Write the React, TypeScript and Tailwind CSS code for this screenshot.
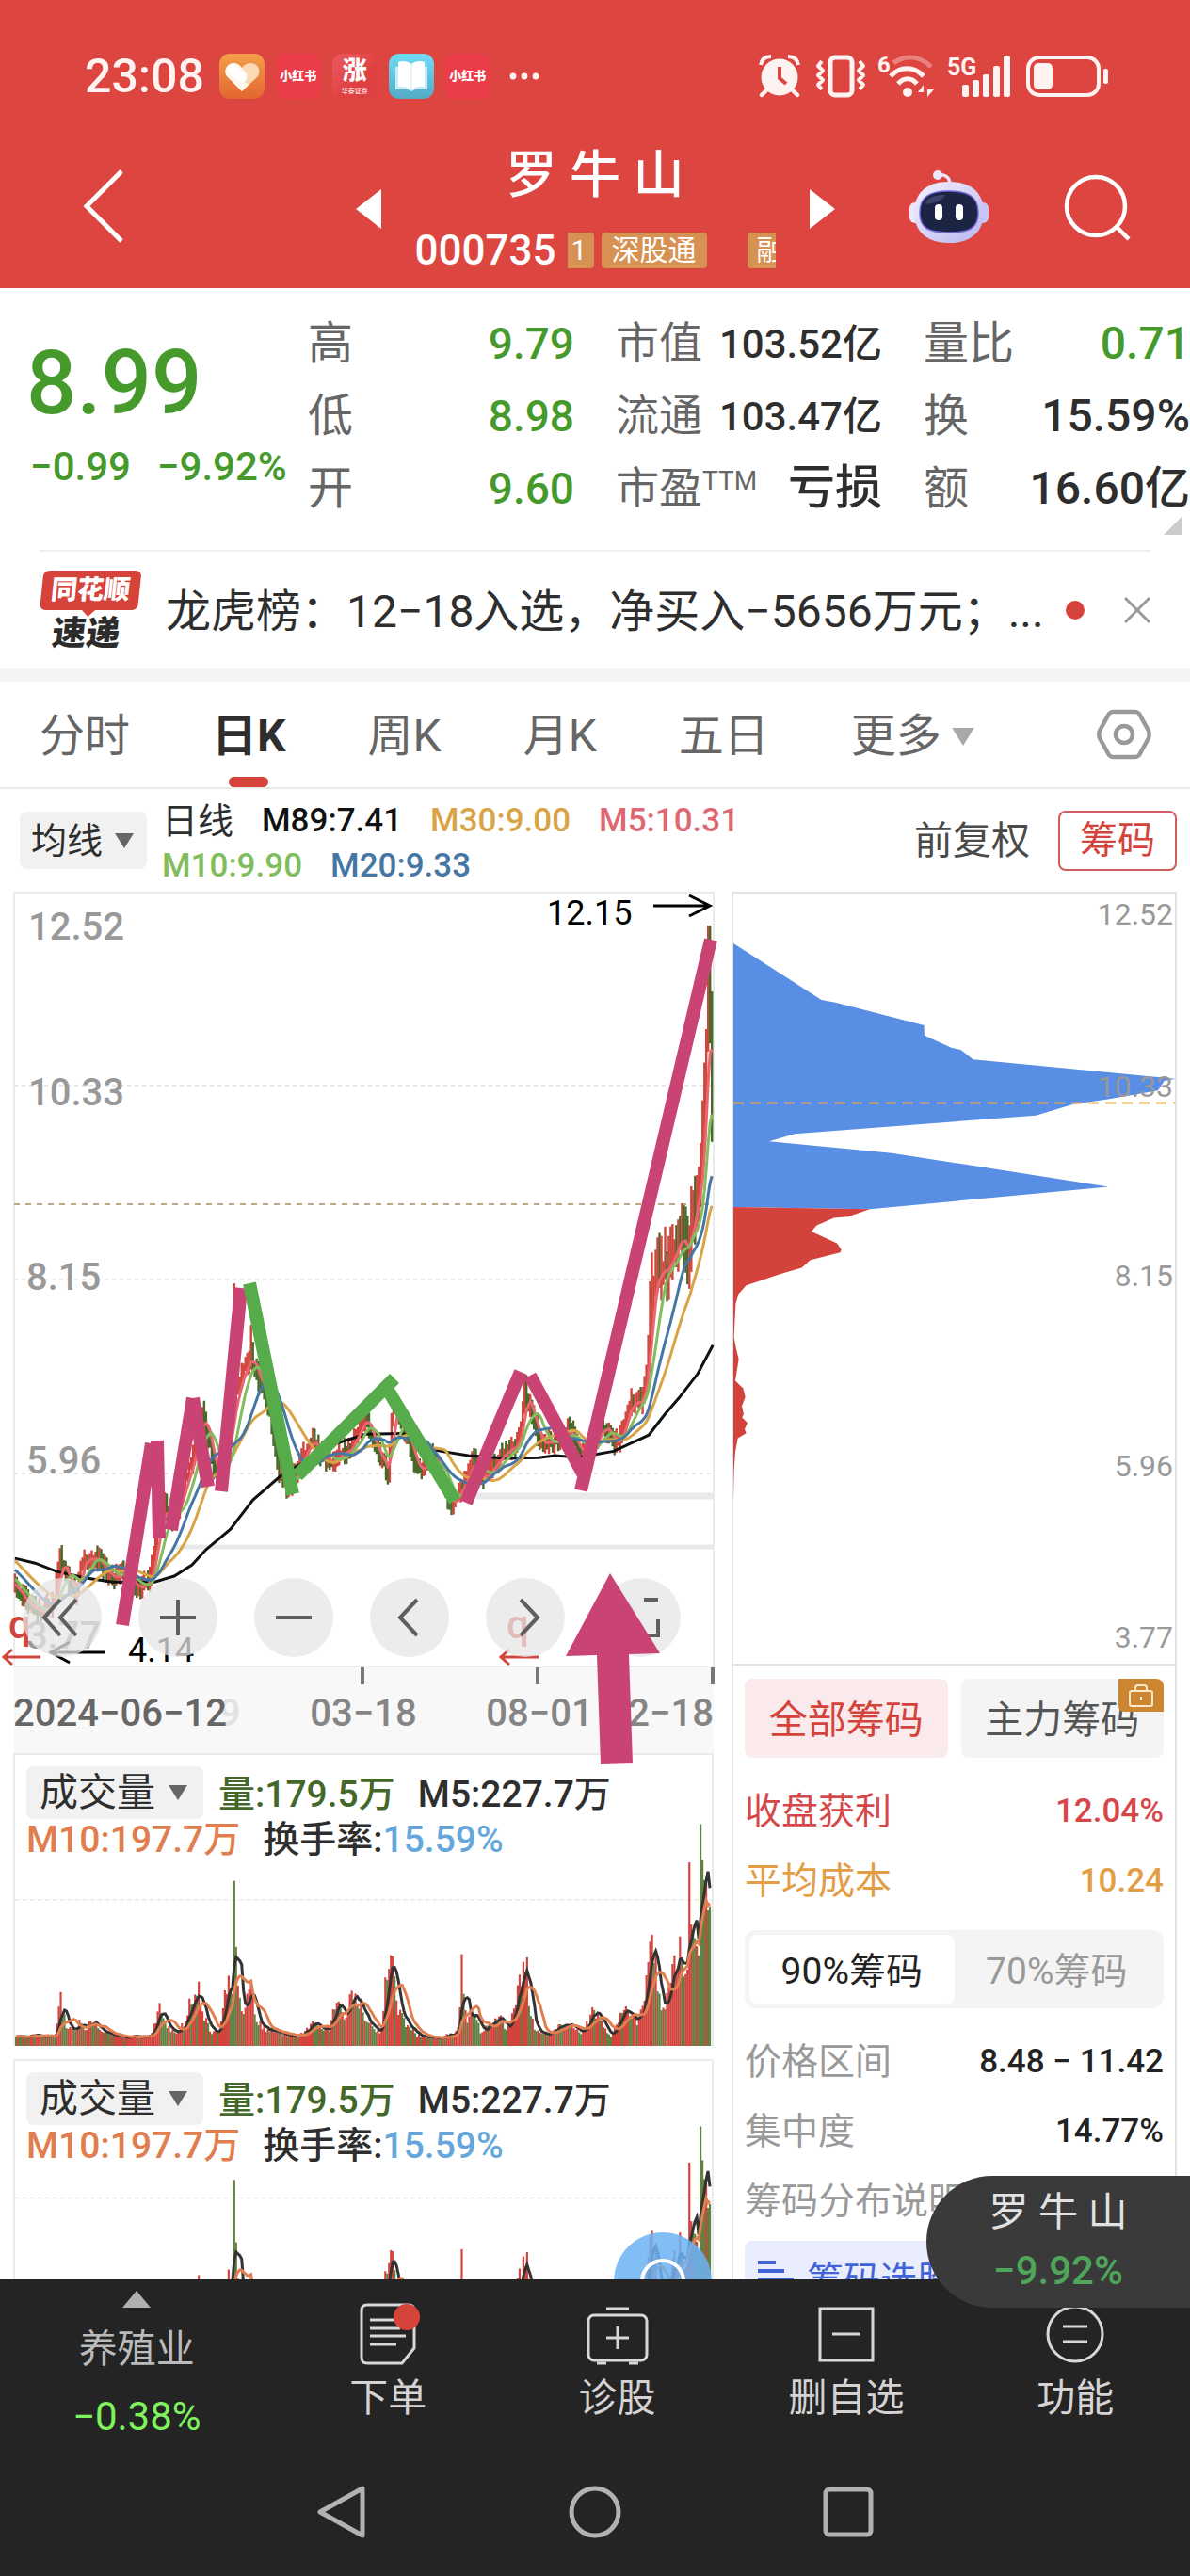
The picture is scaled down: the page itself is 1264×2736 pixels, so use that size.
import type { ReactNode } from "react"

type Point = [number, number]

const START = 32
const STEP = 4
const COUNT = 373

const closeKeys: Point[] = [
    [-90, 830], [30, 1000], [60, 1060], [90, 1090], [115, 1040], [128, 920], [140, 960], [160, 1030], [175, 930],
    [205, 915], [240, 980], [262, 950], [300, 1010], [318, 990], [330, 880], [350, 750], [370, 810], [385, 720],
    [410, 620], [430, 470], [445, 540], [455, 640], [472, 690], [490, 520], [501, 420], [515, 350], [535, 290],
    [550, 360], [575, 450], [590, 620], [612, 700], [640, 620], [665, 550], [700, 620], [740, 590], [780, 480],
    [805, 590], [828, 650], [838, 430], [860, 500], [890, 640], [905, 640], [925, 590], [963, 760], [985, 700],
    [1007, 620], [1035, 670], [1080, 580], [1105, 570], [1120, 410], [1135, 470], [1155, 560], [1190, 550],
    [1216, 520], [1240, 590], [1265, 580], [1290, 500], [1315, 570], [1335, 490], [1350, 430], [1370, 430],
    [1380, 330], [1392, 100], [1400, 40], [1425, 20], [1445, -50], [1457, -80], [1470, 0], [1478, -200],
    [1485, -150], [1493, -250], [1500, -400], [1506, -600], [1512, -850], [1516, -760], [1522, -300],
]

const slowKeys: Point[] = [
    [32, 915], [75, 930], [120, 955], [180, 975], [240, 988], [330, 988], [372, 970], [410, 935], [440, 888],
    [492, 825], [540, 735], [600, 660], [660, 610], [720, 560], [780, 532], [860, 530], [930, 582], [1000, 598],
    [1080, 607], [1150, 605], [1185, 598], [1235, 604], [1310, 585], [1385, 535], [1420, 470], [1450, 420],
    [1490, 345], [1522, 258],
]

const volumeKeys: Point[] = [
    [30, 838], [118, 838], [122, 760], [127, 715], [131, 745], [140, 800], [160, 820], [170, 780], [180, 825],
    [195, 778], [210, 820], [240, 840], [320, 840], [330, 800], [337, 735], [350, 800], [375, 825], [395, 800],
    [405, 730], [423, 685], [436, 770], [450, 825], [470, 820], [480, 710], [488, 668], [495, 720], [497, 690],
    [501, 395], [505, 585], [510, 700], [518, 775], [527, 720], [535, 690], [545, 780], [570, 820], [600, 830],
    [640, 840], [665, 800], [705, 815], [722, 707], [735, 790], [750, 710], [770, 727], [785, 800], [815, 830],
    [826, 650], [834, 542], [840, 612], [850, 740], [865, 790], [890, 835], [940, 845], [975, 825], [983, 810],
    [987, 606], [993, 720], [1000, 790], [1010, 740], [1030, 830], [1067, 770], [1085, 815], [1100, 760],
    [1113, 665], [1120, 628], [1128, 615], [1133, 760], [1145, 820], [1170, 835], [1216, 790], [1250, 830],
    [1268, 747], [1290, 800], [1310, 840], [1330, 770], [1345, 755], [1365, 800], [1378, 725], [1392, 570],
    [1397, 550], [1402, 590], [1412, 720], [1422, 760], [1432, 700], [1442, 590], [1450, 690], [1457, 555],
    [1465, 670], [1473, 650], [1477, 342], [1482, 465], [1487, 560], [1496, 610], [1501, 232], [1505, 335],
    [1510, 335], [1515, 480], [1522, 495],
]

const noise = (i: number) => {
    const v = Math.sin(i * 127.1 + 11.7) * 43758.5453
    return v - Math.floor(v)
}

const valueAt = (keys: Point[], x: number) => {
    if (x <= keys[0][0]) return keys[0][1]
    for (let i = 1; i < keys.length; i++) {
        if (x <= keys[i][0]) {
            const [x0, y0] = keys[i - 1]
            const [x1, y1] = keys[i]
            return y0 + ((y1 - y0) * (x - x0)) / (x1 - x0)
        }
    }
    return keys[keys.length - 1][1]
}

// chart grid to svg user units
const px = (x: number) => x / 2.01
const py = (y: number) => 1340 + y / 2.904

const closes = Array.from({ length: COUNT + 30 }, (_, i) => {
    const x = START + (i - 30) * STEP
    return valueAt(closeKeys, x) + (noise(i) - 0.5) * 26
})

const average = (values: number[], i: number, n: number) => {
    const part = values.slice(Math.max(0, i - n + 1), i + 1)
    return part.reduce((a, b) => a + b, 0) / part.length
}

const maPath = (n: number) =>
    Array.from({ length: COUNT }, (_, i) => `${i ? "L" : "M"}${px(START + i * STEP).toFixed(1)} ${py(average(closes, i + 30, n)).toFixed(1)}`).join("")

const toPath = (keys: Point[]) => keys.map(([x, y], i) => `${i ? "L" : "M"}${px(x).toFixed(1)} ${py(y).toFixed(1)}`).join("")

const candles = Array.from({ length: COUNT }, (_, i) => {
    const x = START + i * STEP
    const close = closes[i + 30]
    const open = closes[i + 29]
    const wide = x > 1385 ? 3 : 1
    let high = Math.min(open, close) - (8 + noise(i + 500) * 34) * wide
    const low = Math.max(open, close) + (8 + noise(i + 900) * 26) * wide
    if (Math.abs(x - 501) < 2) high = 67
    if (Math.abs(x - 537) < 2) high = 195
    if (Math.abs(x - 1122) < 3) high = 350
    if (Math.abs(x - 1514) < 3) high = -1037
    return { x: px(x), high: py(high), low: py(low), up: close < open }
})

const tops = Array.from({ length: COUNT }, (_, i) => {
    const x = START + i * STEP
    const peak = volumeKeys.find(([kx, ky]) => Math.abs(kx - x) < 2 && ky < 730)
    if (peak) return peak[1]
    return 870 - (870 - valueAt(volumeKeys, x)) * (0.72 + noise(i + 40) * 0.34)
})

const isGreen = (i: number) => {
    const x = START + i * STEP
    if (Math.abs(x - 503) < 4 || Math.abs(x - 1500) < 2 || x > 1516) return true
    return (tops[i - 1] ?? 0) < tops[i] && noise(i + 70) > 0.25
}

const volumePath = (n: number) =>
    tops.map((_, i) => `${i ? "L" : "M"}${START + i * STEP} ${average(tops, i, n).toFixed(1)}`).join("")

function Caret({ className }: { className: string }) {
    return (
        <svg viewBox="0 0 22 16" className={className} fill="currentColor">
            <path d="M1 0h20L11 16z" />
        </svg>
    )
}

function StatusBar() {
    return (
        <div className="flex h-[146px] items-center pt-4 pl-[90px] pr-[86px]">
            <span className="text-[50px] font-medium leading-[60px] text-[#fff3f2]">23:08</span>
            <div className="ml-4 flex items-center gap-3">
                <svg viewBox="0 0 48 48" className="size-12">
                    <defs>
                        <linearGradient id="orange" x1="0" y1="0" x2="0" y2="1">
                            <stop stopColor="#f3a04a" />
                            <stop offset="1" stopColor="#e3652f" />
                        </linearGradient>
                    </defs>
                    <rect width="48" height="48" rx="11" fill="url(#orange)" />
                    <path d="M24 40 8 24a9 9 0 0 1 0-10c4-6 12-5 16 1 4-6 13-7 17-1a9 9 0 0 1-1 11z" fill="#fbd9b4" />
                    <path d="M24 40 8 24a9 9 0 0 1 0-10c4-5 10-5 14-1l7 8c2 4-2 8-6 6l8 6z" fill="#fff" opacity=".75" />
                    <path d="m13 16 11 9" stroke="#fff" strokeWidth="10" strokeLinecap="round" />
                </svg>
                <span className="flex size-12 items-center justify-center rounded-[11px] bg-[#ea3d49] text-[13px] font-black text-white">小红书</span>
                <span className="flex size-12 flex-col items-center justify-center rounded-[11px] bg-linear-to-br from-[#ec5a64] to-[#df4041] to-60% text-white">
                    <span className="text-[26px] font-black leading-[32px]">涨</span>
                    <span className="text-[7px] leading-[12px]">华泰证券</span>
                </span>
                <svg viewBox="0 0 48 48" className="size-12">
                    <defs>
                        <linearGradient id="sky" x1="0" y1="0" x2="0" y2="1">
                            <stop stopColor="#71dcf6" />
                            <stop offset="1" stopColor="#54aac6" />
                        </linearGradient>
                    </defs>
                    <rect width="48" height="48" rx="11" fill="url(#sky)" />
                    <path d="M7 14h34v24H28l-4 2-4-2H7z" fill="#c4eef8" />
                    <path d="M10 9c5-2 10-1 14 2 4-3 9-4 14-2v26c-5-1-10 0-14 4-4-4-9-5-14-4z" fill="#fff" />
                    <path d="M24 11v28" stroke="#cfe9f1" />
                </svg>
                <span className="flex size-12 items-center justify-center rounded-[11px] bg-[#ea3d49] text-[13px] font-black text-white">小红书</span>
            </div>
            <svg viewBox="0 0 32 8" className="ml-5 h-2 w-8" fill="#fff3f2">
                <circle cx="4" cy="4" r="3.4" />
                <circle cx="16" cy="4" r="3.4" />
                <circle cx="28" cy="4" r="3.4" />
            </svg>
            <div className="ml-auto flex items-center gap-3 text-[#fff3f2]">
                <svg viewBox="0 0 44 46" className="h-[46px] w-[44px]">
                    <circle cx="22" cy="24" r="19.5" fill="currentColor" />
                    <path d="M2 11c1-6 5-9 11-9M42 11c-1-6-5-9-11-9" stroke="currentColor" strokeWidth="4" fill="none" />
                    <path d="m8 38-5 5M36 38l5 5" stroke="currentColor" strokeWidth="4.500" strokeLinecap="round" />
                    <path d="M22 13v12l7 6" stroke="#dd4540" strokeWidth="4" fill="none" />
                </svg>
                <svg viewBox="0 0 54 46" className="ml-1 h-[46px] w-[54px]" fill="none" stroke="currentColor" strokeLinejoin="round">
                    <rect x="16" y="3" width="23" height="40" rx="5" strokeWidth="5" />
                    <path d="m7 7-4 5 5 5-5 5 5 5-5 5 4 5M47 7l4 5-5 5 5 5-5 5 5 5-4 5" strokeWidth="4" />
                </svg>
                <svg viewBox="0 0 62 48" className="h-12 w-[62px]" fill="none" stroke="currentColor">
                    <text x="0" y="20" fontSize="24" fontWeight="700" fill="currentColor" stroke="none">6</text>
                    <path d="M17 10c13-10 29-7 40 4" strokeWidth="5" opacity=".35" />
                    <path d="M14 24c10-11 25-11 35 0" strokeWidth="5" />
                    <path d="M22 32c6-7 14-7 20 0" strokeWidth="5" />
                    <circle cx="32" cy="41" r="5" fill="currentColor" stroke="none" />
                    <path d="M49 46V33l-6 8h6zM53 33v13l7-8h-7z" fill="currentColor" stroke="none" />
                </svg>
                <svg viewBox="0 0 68 48" className="h-12 w-[68px]" fill="currentColor">
                    <text x="0" y="23" fontSize="25" fontWeight="700">5G</text>
                    <rect x="16" y="33" width="7" height="13" rx="2" />
                    <rect x="27" y="28" width="7" height="18" rx="2" />
                    <rect x="38" y="22" width="7" height="24" rx="2" />
                    <rect x="49" y="13" width="7" height="33" rx="2" />
                    <rect x="60" y="2" width="7" height="44" rx="2" />
                </svg>
                <svg viewBox="0 0 88 46" className="ml-1 h-[46px] w-[88px]">
                    <rect x="2" y="3" width="75" height="40" rx="12" fill="none" stroke="currentColor" strokeWidth="4" />
                    <rect x="8" y="9" width="20" height="28" rx="5" fill="currentColor" />
                    <rect x="82" y="15" width="5" height="16" rx="2" fill="currentColor" />
                </svg>
            </div>
        </div>
    )
}

function TitleBar() {
    return (
        <div className="grid h-40 grid-cols-[1fr_auto_1fr] items-center">
            <button aria-label="返回" className="ml-[88px] w-11 pb-3.5">
                <svg viewBox="0 0 44 78" className="h-[78px] w-11" fill="none" stroke="#fff" strokeWidth="5">
                    <path d="M41 2 4 39l37 37" />
                </svg>
            </button>
            <div className="flex items-center gap-9">
                <button aria-label="上一只" className="pb-2">
                    <svg viewBox="0 0 27 42" className="h-[42px] w-[27px]" fill="#fff"><path d="M27 0v42L0 21z" /></svg>
                </button>
                <div className="w-[383px] text-white">
                    <h1 className="h-20 text-center text-[54px] font-medium leading-[80px]">罗 牛 山</h1>
                    <div className="flex h-[78px] items-center">
                        <span className="text-[44px] font-medium">000735</span>
                        <div className="ml-auto flex w-[221px] gap-2 overflow-hidden text-[30px] leading-[38px]">
                            <span className="w-7 shrink-0 rounded-r bg-[#d69153] pl-1">1</span>
                            <span className="shrink-0 rounded bg-[#d69153] px-[11px]">深股通</span>
                            <span className="ml-[35px] shrink-0 rounded bg-[#d69153] px-[10px]">融</span>
                        </div>
                    </div>
                </div>
                <button aria-label="下一只" className="pb-2">
                    <svg viewBox="0 0 27 42" className="h-[42px] w-[27px]" fill="#fff"><path d="M0 0v42l27-21z" /></svg>
                </button>
            </div>
            <div className="flex items-center justify-end gap-20 pb-3 pr-[62px]">
                <button aria-label="智能助手">
                    <svg viewBox="0 0 84 78" className="h-[78px] w-[84px]">
                        <defs>
                            <linearGradient id="shell" x1="0" y1="0" x2="1" y2="1">
                                <stop stopColor="#f4f2ff" />
                                <stop offset="1" stopColor="#b8b6ee" />
                            </linearGradient>
                        </defs>
                        <path d="M30 5c8-1 13 2 13 10" stroke="#efe6fb" strokeWidth="3.500" fill="none" />
                        <circle cx="30" cy="5" r="5" fill="#efe6fb" />
                        <rect x="0" y="34" width="12" height="22" rx="6" fill="#ece8fd" />
                        <rect x="72" y="34" width="12" height="22" rx="6" fill="#c9c6f3" />
                        <path d="M42 12c25 0 37 13 37 33S65 77 42 77 5 65 5 45s12-33 37-33z" fill="url(#shell)" />
                        <path d="M42 22c22 0 31 7 31 23s-9 21-31 21-31-5-31-21 9-23 31-23z" fill="#1c2444" stroke="#6f63d8" strokeWidth="1.500" />
                        <path d="M16 36c3-8 12-10 22-10-4 7-12 9-22 10z" fill="#48527a" opacity=".7" />
                        <rect x="27" y="36" width="8" height="17" rx="4" fill="#fff" />
                        <rect x="49" y="36" width="8" height="17" rx="4" fill="#fff" />
                    </svg>
                </button>
                <button aria-label="搜索">
                    <svg viewBox="0 0 72 72" className="size-[72px]" fill="none" stroke="#fff" strokeWidth="4.500">
                        <circle cx="34" cy="35" r="31" />
                        <path d="m56 57 13 13" />
                    </svg>
                </button>
            </div>
        </div>
    )
}

function Quote({ label, children }: { label: ReactNode; children: ReactNode }) {
    return (
        <div className="flex h-[77px] items-center justify-between whitespace-nowrap">
            <dt className="text-[#666]">{label}</dt>
            <dd className="font-medium">{children}</dd>
        </div>
    )
}

function QuotePanel() {
    return (
        <section className="relative grid grid-cols-[minmax(0,251fr)_minmax(0,283fr)_minmax(0,283fr)_minmax(0,283fr)] gap-11 pl-8 pt-5 pb-[27px] text-[48px]">
            <div className="whitespace-nowrap text-[#459a2b]">
                <p className="-ml-1 pt-[22px] text-[94px] font-medium leading-[118px]">8.99</p>
                <p className="flex gap-7 text-[42px] font-medium leading-[60px]">
                    <span>−0.99</span>
                    <span>−9.92%</span>
                </p>
            </div>
            <dl className="text-[#459a2b]">
                <Quote label="高"><span className="text-[46px]">9.79</span></Quote>
                <Quote label="低"><span className="text-[46px]">8.98</span></Quote>
                <Quote label="开"><span className="text-[46px]">9.60</span></Quote>
            </dl>
            <dl className="text-[46px] text-[#2e2e2e]">
                <Quote label="市值"><span className="text-[42px]">103.52亿</span></Quote>
                <Quote label="流通"><span className="text-[42px]">103.47亿</span></Quote>
                <Quote label={<>市盈<sup className="text-[28px]">TTM</sup></>}><span className="text-[50px]">亏损</span></Quote>
            </dl>
            <dl className="text-[#2e2e2e]">
                <Quote label="量比"><span className="text-[#459a2b]">0.71</span></Quote>
                <Quote label="换">15.59%</Quote>
                <Quote label="额">16.60亿</Quote>
            </dl>
            <svg viewBox="0 0 20 20" className="absolute bottom-4 right-2 size-5" fill="#ccc"><path d="M20 0v20H0z" /></svg>
        </section>
    )
}

function NewsRow() {
    return (
        <section className="mx-[42px] flex h-[126px] items-center border-t-2 border-[#efefef]">
            <div className="flex w-[104px] shrink-0 -skew-x-6 flex-col items-center">
                <span className="w-full rounded-md bg-[#d6433b] text-center text-[28px] font-black leading-[42px] text-white">同花顺</span>
                <svg viewBox="0 0 14 7" className="h-[7px] w-[14px]" fill="#d6433b"><path d="M0 0h14L7 7z" /></svg>
                <span className="text-[36px] font-black leading-[36px] text-[#2c2c2c]">速递</span>
            </div>
            <a href="#news" className="ml-[30px] min-w-0 flex-1 overflow-hidden whitespace-nowrap pt-1 text-[48px] leading-[64px] text-[#2e2e2e]">
                龙虎榜：12−18入选，净买入−5656万元；...
            </a>
            <span className="mr-[42px] size-5 rounded-full bg-[#d6433b]" />
            <button aria-label="关闭">
                <svg viewBox="0 0 28 28" className="size-7" stroke="#999" strokeWidth="3"><path d="m1 1 26 26M27 1 1 27" /></svg>
            </button>
        </section>
    )
}

function PeriodTabs() {
    return (
        <nav className="flex h-[114px] items-center gap-[87px] border-b-2 border-[#e9e9e9] pl-[42px] pr-[41px] text-[48px] text-[#666]">
            <button className="pt-1">分时</button>
            <button className="relative h-full pt-1 font-bold text-[#2e2e2e]">
                日K
                <span className="absolute bottom-0 left-1/2 h-[11px] w-[42px] -translate-x-1/2 rounded-md bg-[#d6433b]" />
            </button>
            <button className="pt-1">周K</button>
            <button className="pt-1">月K</button>
            <button className="pt-1">五日</button>
            <button className="flex items-center gap-2.5 pt-1">
                更多
                <Caret className="h-[21px] w-[26px] text-[#a9a9a9]" />
            </button>
            <button aria-label="设置" className="ml-auto">
                <svg viewBox="0 0 58 54" className="h-[54px] w-[58px]" fill="none" stroke="#999" strokeWidth="4.500" strokeLinejoin="round">
                    <path d="M17 3h24c2 0 3 1 4 2l10 18c1 3 1 5 0 8L45 49c-1 1-2 2-4 2H17c-2 0-3-1-4-2L3 31c-1-3-1-5 0-8L13 5c1-1 2-2 4-2z" />
                    <circle cx="29" cy="27" r="9" />
                </svg>
            </button>
        </nav>
    )
}

function AverageRow() {
    return (
        <section className="flex h-[109px] items-center pl-[21px] pr-3.5">
            <label className="flex h-[61px] w-[135px] shrink-0 items-center rounded-lg bg-[#f1f1f1] pl-3">
                <select aria-label="指标" className="w-[78px] appearance-none text-[38px] leading-[56px] text-[#2e2e2e] outline-none">
                    <option>均线</option>
                </select>
                <Caret className="ml-2.5 h-4 w-[22px] text-[#666]" />
            </label>
            <div className="ml-4 flex w-[660px] flex-wrap gap-x-[30px] pt-1.5 text-[35px] font-medium leading-[48px]">
                <span className="text-[38px] font-normal text-[#2e2e2e]">日线</span>
                <span className="text-[#111]">M89:7.41</span>
                <span className="text-[#d9a445]">M30:9.00</span>
                <span className="text-[#dd6873]">M5:10.31</span>
                <span className="text-[#80bd5c]">M10:9.90</span>
                <span className="text-[#4576a4]">M20:9.33</span>
            </div>
            <button className="ml-auto whitespace-nowrap text-[41px] leading-[60px] text-[#4a4a4a]">前复权</button>
            <button className="ml-[30px] h-16 w-[126px] rounded-lg border-2 border-[#d25c5a] text-[40px] leading-[56px] text-[#d6433b]">筹码</button>
        </section>
    )
}

const chartTools: { name: string; d: string }[] = [
    { name: "最左", d: "M20 3 3 22l17 19M37 3 20 22l17 19" },
    { name: "放大", d: "M22 3v38M3 22h38" },
    { name: "缩小", d: "M3 22h38" },
    { name: "左移", d: "M30 3 12 22l18 19" },
    { name: "右移", d: "m17 3 18 19-18 19" },
    { name: "全屏", d: "M25 3h15M40 24v17H25" },
]

function PriceChart() {
    return (
        <div className="relative z-10">
            <svg viewBox="0 947 768 915" className="w-full" fill="none">
                <rect x="15" y="1771" width="743" height="91" fill="#f8f8f8" />
                <rect x="15" y="948" width="743" height="822" stroke="#ebebeb" strokeWidth="2" fill="#fff" />
                <path d="M15 1153h743M15 1359h743M15 1565h743" stroke="#e6e6e6" strokeWidth="2" strokeDasharray="4 4" />
                <path d="M15 1279h743" stroke="#b9a981" strokeWidth="2" strokeDasharray="6 6" />
                <path d="M505 1589h253" stroke="#e9e9e9" strokeWidth="7" />
                <path d="M185 1643h573" stroke="#e9e9e9" strokeWidth="5" />
                <g fill="#999" fontSize="40" fontWeight="500">
                    <text x="30" y="998">12.52</text>
                    <text x="30" y="1174">10.33</text>
                    <text x="28" y="1370">8.15</text>
                    <text x="28" y="1565">5.96</text>
                    <text x="28" y="1751">3.77</text>
                </g>
                {candles.map((c, i) => (
                    <path key={i} d={`M${c.x.toFixed(1)} ${c.high.toFixed(1)}V${c.low.toFixed(1)}`} stroke={c.up ? "#d0453c" : "#47692a"} strokeWidth="2.400" />
                ))}
                <path d={toPath(slowKeys)} stroke="#111" strokeWidth="3" />
                <path d={maPath(5)} stroke="#ea6670" strokeWidth="3" />
                <path d={maPath(30)} stroke="#d9a445" strokeWidth="3" />
                <path d={maPath(10)} stroke="#84bd5e" strokeWidth="3" />
                <path d={maPath(20)} stroke="#4576a4" strokeWidth="3" />
                <g fontSize="36" fill="#000">
                    <text x="581" y="982">12.15</text>
                    <text x="136" y="1765">4.14</text>
                </g>
                <path d="M694 962h60m-22-11 22 11-22 11M112 1755H54m20-11-20 11 20 11" stroke="#000" strokeWidth="3" />
                <path d="M43 1760H4m9-8-9 8 9 8M572 1760h-40m9-8-9 8 9 8" stroke="#d0453c" strokeWidth="3" />
                <text x="9" y="1740" fontSize="42" fontWeight="500" fill="#d0453c">q</text>
                <text x="538" y="1740" fontSize="42" fontWeight="500" fill="#d0453c">q</text>
                <path d="M385 1771v18M571 1771v18M757 1771v18" stroke="#777" strokeWidth="4" />
                <g fontSize="40" fontWeight="500" fill="#858585">
                    <text x="233" y="1833" fill="#e2e2e2">9</text>
                    <text x="14" y="1833" fill="#666">2024−06−12</text>
                    <text x="386" y="1833" textAnchor="middle">03−18</text>
                    <text x="573" y="1833" textAnchor="middle">08−01</text>
                    <text x="758" y="1833" textAnchor="end">12−18</text>
                </g>
            </svg>
            <div className="absolute bottom-[102px] left-6 flex gap-[39px]">
                {chartTools.map((tool) => (
                    <button key={tool.name} aria-label={tool.name} className="flex size-[84px] items-center justify-center rounded-full bg-[#e6e6e6]/75">
                        <svg viewBox="0 0 44 44" className="size-11" fill="none" stroke="#5f5f5f" strokeWidth="4"><path d={tool.d} /></svg>
                    </button>
                ))}
            </div>
            {/* hand-drawn trend lines */}
            <svg viewBox="0 947 768 915" className="pointer-events-none absolute inset-0 w-full overflow-visible" fill="none" strokeWidth="14">
                <path d="M130 1726 161 1533M167 1530l2 104M182 1625l23-140M205 1485l16 94M235 1584l21-216" stroke="#c94375" />
                <path d="m265 1363 46 224M316 1567l103-103M413 1478l70 116" stroke="#56ab4b" />
                <path d="m495 1596 58-139M563 1461l56 104M617 1583 755 998" stroke="#c94375" />
                <path d="m648 1671 53 85-33 1 4 116-34 1-4-116-33 1z" fill="#c94375" />
            </svg>
        </div>
    )
}

function VolumePanel({ plotClass }: { plotClass: string }) {
    return (
        <section className="ml-3.5 mr-2.5 grid border-2 border-b-0 border-[#ebebeb]">
            <svg viewBox="30 33 1494 837" preserveAspectRatio="none" className={plotClass} fill="none">
                <path d="M30 450h1494" stroke="#dcdcdc" strokeWidth="2" strokeDasharray="10 6" />
                {tops.map((y, i) => (
                    <path key={i} d={`M${START + i * STEP} 870V${y.toFixed(1)}`} stroke={isGreen(i) ? "#5f8244" : "#d3433b"} strokeWidth="4.400" />
                ))}
                <path d={volumePath(5)} stroke="#333" strokeWidth="3" vectorEffect="non-scaling-stroke" />
                <path d={volumePath(10)} stroke="#e27f50" strokeWidth="3" vectorEffect="non-scaling-stroke" />
            </svg>
            <div className="relative flex flex-wrap content-start gap-x-6 pl-3 pt-3 text-[39px] font-medium leading-[48px] [grid-area:1/1]">
                <label className="-mr-2 flex h-14 w-[188px] items-center rounded-lg bg-[#f1f1f1] pl-3.5">
                    <select aria-label="副图指标" className="w-[126px] appearance-none text-[41px] font-normal leading-[56px] text-[#2e2e2e] outline-none">
                        <option>成交量</option>
                    </select>
                    <Caret className="ml-2.5 h-4 w-[22px] text-[#666]" />
                </label>
                <span className="pt-1.5 text-[#44672a]">量:179.5万</span>
                <span className="pt-1.5 pr-20 text-[#2e2e2e]">M5:227.7万</span>
                <span className="-mt-0.5 text-[#e07e50]">M10:197.7万</span>
                <span className="-mt-0.5 text-[#2e2e2e]">换手率:<span className="text-[#65a7dc]">15.59%</span></span>
            </div>
        </section>
    )
}

function ChipChart() {
    return (
        <svg viewBox="778 948 470 820" className="w-full">
            <g transform="translate(760 930) scale(.3333 .542)">
                <path fill="#598ee5" d="M54 131 335 242l45 5 283 45 1 20 86 24 30 4 40 19 647 38-37 4-20 19-160 17-110 10-120 22-770 36-82 15 392 23 692 66-762 44-436-4z" />
                <path fill="#d3433b" d="M54 649l436 4-70 15-45 2-55 15-17 12 82 23 14 13-4 5-95 15-28 15-67 12-110 23-25 17-9 20-5 65 6 20 9 23-11 42 25 15 7 17-11 18 6 15-5 7 17 11-9 12 5 8-27 10-8 27-4 35-2 60z" />
            </g>
            <path d="M778 1171h472" stroke="#e0ac50" strokeWidth="2" strokeDasharray="11 7" />
            <g fontSize="32" fill="#999" textAnchor="end">
                <text x="1246" y="981">12.52</text>
                <text x="1246" y="1164">10.33</text>
                <text x="1246" y="1366">8.15</text>
                <text x="1246" y="1568">5.96</text>
                <text x="1246" y="1751">3.77</text>
            </g>
        </svg>
    )
}

function ChipRow({ label, value, className }: { label: string; value?: string; className: string }) {
    return (
        <div className={`flex h-[74px] items-center justify-between whitespace-nowrap pt-0.5 ${className}`}>
            <dt className="text-[39px]">{label}</dt>
            <dd className="text-[35px] font-medium">{value}</dd>
        </div>
    )
}

function ChipPanel() {
    return (
        <aside className="ml-[9px] mr-3.5 border-2 border-[#e2e2e2]">
            <ChipChart />
            <div className="border-t-2 border-[#e2e2e2] px-3 pt-3.5">
                <div className="grid grid-cols-2 gap-3.5 whitespace-nowrap text-[41px]">
                    <button className="h-[84px] rounded-lg bg-[#faeaeb] pt-1 text-[#d3433b]">全部筹码</button>
                    <button className="relative h-[84px] rounded-lg bg-[#f4f4f4] pt-1 text-[#555]">
                        主力筹码
                        <span className="absolute right-0 top-0 flex h-[35px] w-12 items-center justify-center rounded-tr-lg rounded-bl-md bg-[#cc8632]">
                            <svg viewBox="0 0 28 28" className="size-7" fill="none" stroke="#fde9c8" strokeWidth="2">
                                <rect x="2" y="9" width="24" height="16" rx="2" />
                                <path d="M8 9V6c0-2 1-3 3-3h6c2 0 3 1 3 3v3M14 15v4" />
                            </svg>
                        </span>
                    </button>
                </div>
                <dl className="mt-[19px]">
                    <ChipRow label="收盘获利" value="12.04%" className="text-[#d6474a]" />
                    <ChipRow label="平均成本" value="10.24" className="text-[#e39d45]" />
                </dl>
                <div className="mt-4 grid h-[83px] grid-cols-2 rounded-xl bg-[#f4f4f4] p-[5px] text-[39px]">
                    <button className="rounded-lg bg-white pt-1 text-[#222]">90%筹码</button>
                    <button className="pt-1 text-[#999]">70%筹码</button>
                </div>
                <dl className="mt-[19px] text-[#999]">
                    <ChipRow label="价格区间" value="8.48 − 11.42" className="[&>dd]:text-[#222]" />
                    <ChipRow label="集中度" value="14.77%" className="[&>dd]:text-[#222]" />
                    <ChipRow label="筹码分布说明" className="" />
                </dl>
                <button className="mt-1.5 flex h-[84px] w-full items-center gap-3.5 rounded-lg bg-[#e9edfd] pl-3.5 text-[39px] text-[#4063d8]">
                    <svg viewBox="0 0 38 42" className="h-[42px] w-[38px]" stroke="currentColor" strokeWidth="4">
                        <path d="M0 2h19M0 11h28M0 20h38M0 29h28M0 38h19" />
                    </svg>
                    筹码选股
                </button>
            </div>
        </aside>
    )
}

function NavItem({ label, children }: { label: string; children: ReactNode }) {
    return (
        <button className="flex flex-col items-center gap-1 pt-6">
            <svg viewBox="0 0 68 68" className="size-[68px]" fill="none" stroke="#d8d8d8" strokeWidth="3">{children}</svg>
            <span className="text-[41px] leading-[60px]">{label}</span>
        </button>
    )
}

function BottomBar() {
    return (
        <footer className="relative z-20 shrink-0 bg-[#242424] text-[#d4d2d2]">
            <nav className="grid h-[179px] grid-cols-[290fr_243fr_243fr_243fr_243fr]">
                <button className="flex flex-col items-center pt-3">
                    <svg viewBox="0 0 30 18" className="h-[18px] w-[30px]" fill="#b0b0b0"><path d="M15 0 30 18H0z" /></svg>
                    <span className="mt-3.5 text-[41px] leading-[60px] text-[#bbb]">养殖业</span>
                    <span className="mt-3 text-[42px] leading-[60px] text-[#7ff25e]">−0.38%</span>
                </button>
                <NavItem label="下单">
                    <path d="M12 3h44c4 0 6 2 6 6v40L49 65H12c-4 0-6-2-6-6V9c0-4 2-6 6-6z" />
                    <path d="M15 19h26M15 28h32M15 36h38M15 45h28" />
                    <circle cx="54" cy="16" r="14" fill="#d6433b" stroke="none" />
                </NavItem>
                <NavItem label="诊股">
                    <path d="M22 7h24" />
                    <rect x="3" y="14" width="62" height="48" rx="6" />
                    <path d="M34 26v24M22 38h24M12 65h10M46 65h10" />
                </NavItem>
                <NavItem label="删自选">
                    <rect x="6" y="7" width="56" height="55" />
                    <path d="M19 34h30" />
                </NavItem>
                <NavItem label="功能">
                    <circle cx="34" cy="34" r="29" />
                    <path d="M21 26h26M21 42h26" />
                </NavItem>
            </nav>
            <div className="flex h-[136px] items-center justify-center gap-[213px]">
                <button aria-label="后退">
                    <svg viewBox="0 0 56 56" className="size-14" fill="none" stroke="#b2b2b2" strokeWidth="5" strokeLinejoin="round"><path d="M50 3v50L5 28z" /></svg>
                </button>
                <button aria-label="主页">
                    <svg viewBox="0 0 56 56" className="size-14" fill="none" stroke="#b2b2b2" strokeWidth="5"><circle cx="28" cy="28" r="25" /></svg>
                </button>
                <button aria-label="最近任务">
                    <svg viewBox="0 0 56 56" className="size-14" fill="none" stroke="#b2b2b2" strokeWidth="5"><rect x="4" y="4" width="48" height="48" rx="4" /></svg>
                </button>
            </div>
            <a href="#stock" className="absolute right-0 -top-[110px] flex h-[140px] w-[280px] flex-col items-center justify-center rounded-l-full bg-[#3a3a3a]">
                <span className="text-[42px] leading-[62px] text-[#e2e2e2]">罗 牛 山</span>
                <span className="text-[42px] font-medium leading-[62px] text-[#4fa65a]">−9.92%</span>
            </a>
        </footer>
    )
}

export default function App() {
    return (
        <div className="flex h-screen flex-col overflow-hidden bg-white font-[Roboto,'Noto_Sans_CJK_SC',sans-serif]">
            <header className="shrink-0 bg-[#dd4540]">
                <StatusBar />
                <TitleBar />
            </header>
            <main className="relative min-h-0 flex-1 overflow-hidden">
                <QuotePanel />
                <NewsRow />
                <div className="h-3.5 bg-[#f4f4f4]" />
                <PeriodTabs />
                <AverageRow />
                <div className="grid grid-cols-[768fr_496fr]">
                    <div>
                        <PriceChart />
                        <VolumePanel plotClass="h-[309px] w-full [grid-area:1/1]" />
                        <div className="h-3.5" />
                        <VolumePanel plotClass="h-[292px] w-full [grid-area:1/1]" />
                    </div>
                    <ChipPanel />
                </div>
                <button aria-label="问答" className="absolute -bottom-[54px] left-[652px] z-10 flex size-[104px] items-center justify-center rounded-full bg-[#6bb3f5]/85">
                    <span className="size-12 rounded-full border-4 border-white" />
                </button>
            </main>
            <BottomBar />
        </div>
    )
}
